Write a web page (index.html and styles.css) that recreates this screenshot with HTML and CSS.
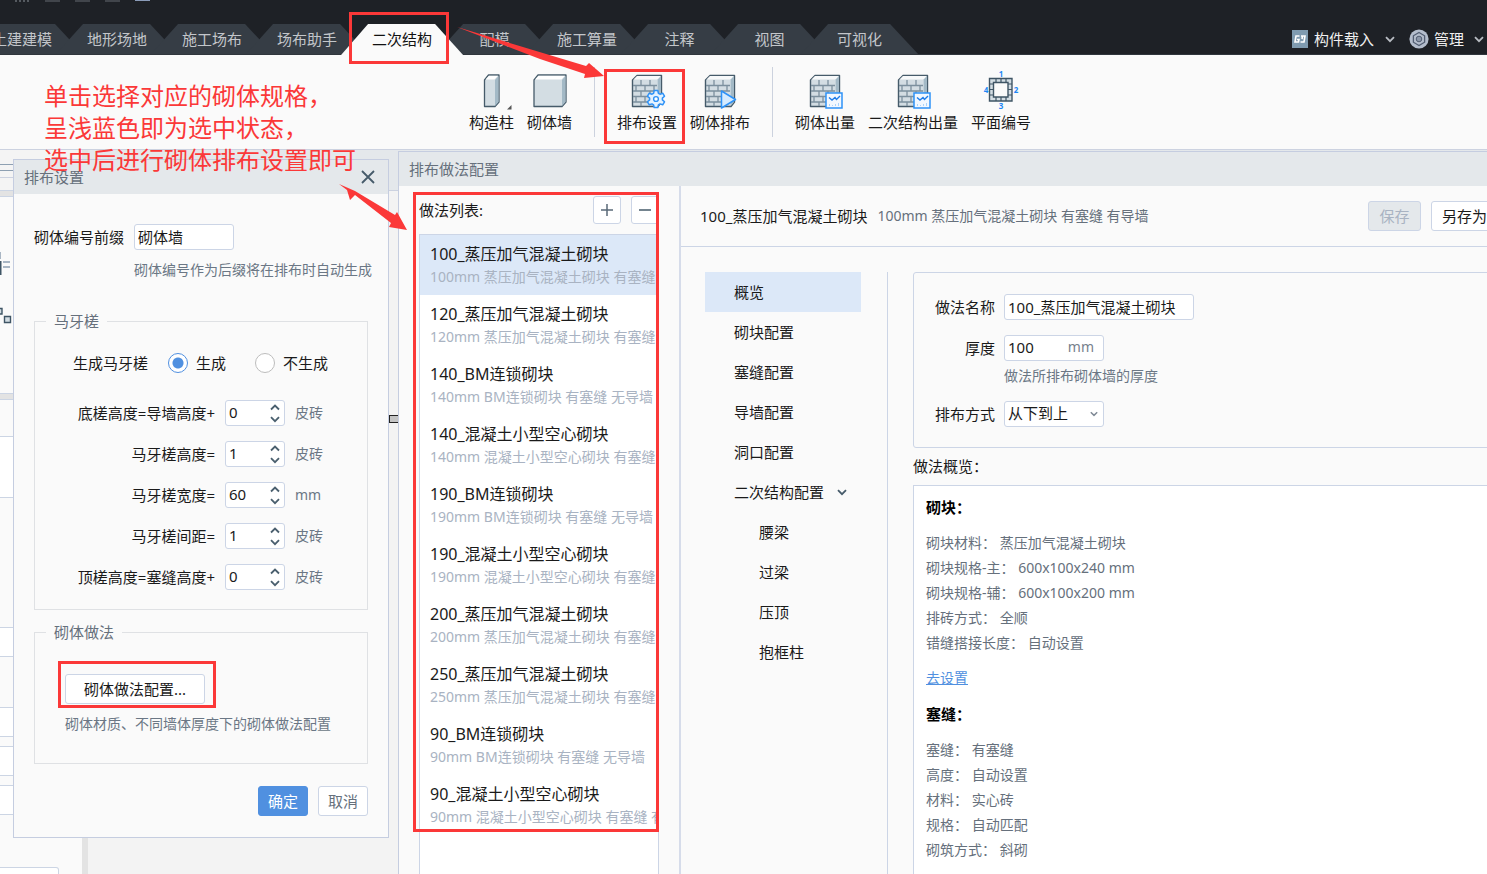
FILE: index.html
```html
<!DOCTYPE html>
<html lang="zh-CN">
<head>
<meta charset="utf-8">
<title>二次结构 - 砌体排布</title>
<link rel="stylesheet" href="styles.css">
</head>
<body>
<svg class="defs" aria-hidden="true">
  <defs>
    <symbol id="wall" viewBox="0 0 36 38">
      <path d="M3.5 35.5V9L8 4.500H32.500V31L29 35.500Z" fill="#d3dde3" stroke="#465b6a" stroke-width="1.400" stroke-linejoin="round"/>
      <path d="M4 9L8 5H32L28.500 8.500H4Z" fill="#f7f9fa"/>
      <path d="M28.700 8.500L32 5V31L28.700 35Z" fill="#a3b9c6"/>
      <path d="M4 14.500H28M4 20H28M4 25.500H28M4 31H28M12 9V14.500M21 9V14.500M7 14.500V20M16 14.500V20M25 14.500V20M12 20V25.500M21 20V25.500M7 25.500V31M16 25.500V31M12 31V35" fill="none" stroke="#7c909e" stroke-width="1.300"/>
    </symbol>
    <symbol id="chart" viewBox="0 0 36 38">
      <rect x="19" y="22" width="16" height="15" fill="#f2f8ff" stroke="#2e92f7" stroke-width="1.500"/>
      <path d="M22 26.500L25 29L28 26.500L29.500 28.500L33 25" fill="none" stroke="#1e7ce8" stroke-width="1.400"/>
      <path d="M22.500 33V35M25.500 34V35M28.500 33V35M31.500 32V35" stroke="#a9d3fb" stroke-width="1"/>
    </symbol>
    <symbol id="down" viewBox="0 0 10 7"><path d="M1 1.200L5 5.200L9 1.200" fill="none" stroke="currentColor" stroke-width="1.800"/></symbol>
    <symbol id="up" viewBox="0 0 10 7"><path d="M1 5.500L5 1.500L9 5.500" fill="none" stroke="currentColor" stroke-width="1.800"/></symbol>
  </defs>
</svg>

<div class="app">
  <header class="topbar">
    <div class="quick"><i class="q1"></i><i class="q2"></i><i class="q2"></i><i class="q2"></i><i class="q3"></i></div>
    <nav class="tabs">
      <button class="tab">土建建模</button>
      <button class="tab">地形场地</button>
      <button class="tab">施工场布</button>
      <button class="tab">场布助手</button>
      <button class="tab active">二次结构</button>
      <button class="tab">配模</button>
      <button class="tab">施工算量</button>
      <button class="tab">注释</button>
      <button class="tab">视图</button>
      <button class="tab">可视化</button>
    </nav>
    <div class="account">
      <button class="menu">
        <svg width="16" height="18" viewBox="0 0 16 18"><rect width="16" height="18" fill="#7f9bb0"/><path d="M7.500 6H4L3 12H6.500L7 9.500H5M9 6H13L12 12H8.500M10.500 6L10 9" fill="none" stroke="#fff" stroke-width="1.600"/></svg>
        构件载入
        <svg class="chev" width="10" height="7"><use href="#down"/></svg>
      </button>
      <button class="menu manage">
        <svg width="20" height="20" viewBox="0 0 20 20"><circle cx="10" cy="10" r="9.600" fill="#b4bdcc"/><path d="M10 3.500L15.600 6.800V13.200L10 16.500L4.400 13.200V6.800Z" fill="none" stroke="#525e72" stroke-width="1.300"/><circle cx="10" cy="10" r="2.800" fill="#8c97a9" stroke="#525e72" stroke-width="1"/></svg>
        管理
        <svg class="chev" width="10" height="7"><use href="#down"/></svg>
      </button>
    </div>
  </header>

  <div class="ribbon">
    <button class="tool">
      <svg width="36" height="38" viewBox="0 0 36 38"><path d="M10.500 35.500V9L14.500 4H25V31L21 35.500Z" fill="#d3dde3" stroke="#465b6a" stroke-width="1.300" stroke-linejoin="round"/><path d="M11.500 8.500L15 4.700H24L20.500 8.500Z" fill="#fff"/><path d="M21 9L24.500 5V31L21 35Z" fill="#a3b9c6"/><path d="M37.500 34V38.500H33Z" fill="#555"/></svg>
      <span>构造柱</span>
    </button>
    <button class="tool">
      <svg width="36" height="38" viewBox="0 0 36 38"><path d="M2 35.500V9L6 4H34V31L30 35.500Z" fill="#d3dde3" stroke="#465b6a" stroke-width="1.300" stroke-linejoin="round"/><path d="M3 8.500L6.500 4.700H33L29.500 8.500Z" fill="#fff"/><path d="M30 9L33.500 5V31L30 35Z" fill="#a3b9c6"/></svg>
      <span>砌体墙</span>
    </button>
    <i class="sep"></i>
    <button class="tool">
      <svg width="36" height="38" viewBox="0 0 36 38"><use href="#wall"/><path d="M25.200 19.500h3.600l.6 2.800 1.600.9 2.700-1 1.800 3-2.100 1.900v1.800l2.100 1.900-1.800 3-2.700-.9-1.600.9-.6 2.800h-3.600l-.6-2.800-1.600-.9-2.700.9-1.800-3 2.100-1.900v-1.800l-2.100-1.900 1.800-3 2.700 1 1.600-.9Z" fill="#e4f2ff" stroke="#2e92f7" stroke-width="1.500" stroke-linejoin="round"/><circle cx="27" cy="28" r="2.400" fill="#fff" stroke="#2e92f7" stroke-width="1.400"/></svg>
      <span>排布设置</span>
    </button>
    <button class="tool">
      <svg width="36" height="38" viewBox="0 0 36 38"><use href="#wall"/><path d="M19.500 20L33.500 28.500L19.500 37Z" fill="#d5ebff" stroke="#2e92f7" stroke-width="1.500" stroke-linejoin="round"/></svg>
      <span>砌体排布</span>
    </button>
    <i class="sep"></i>
    <button class="tool">
      <svg width="36" height="38" viewBox="0 0 36 38"><use href="#wall"/><use href="#chart"/></svg>
      <span>砌体出量</span>
    </button>
    <button class="tool">
      <svg width="36" height="38" viewBox="0 0 36 38"><use href="#wall"/><use href="#chart"/></svg>
      <span>二次结构出量</span>
    </button>
    <button class="tool">
      <svg width="36" height="38" viewBox="0 0 36 38"><path fill-rule="evenodd" d="M6.500 7.500H29V30H6.500ZM10.500 11.500V26H25V11.500Z" fill="#d3dde3" stroke="#3f5565" stroke-width="1.400"/><path d="M13 7.500V11.500M18 7.500V11.500M23 7.500V11.500M13 26V30M18 26V30M23 26V30M6.500 13H10.500M6.500 18.500H10.500M6.500 24H10.500M25 13H29M25 18.500H29M25 24H29" stroke="#3f5565" stroke-width="1.200"/><g class="marks"><text x="18" y="6">1</text><text x="33" y="22">2</text><text x="18" y="38">3</text><text x="3" y="22">4</text></g></svg>
      <span>平面编号</span>
    </button>
  </div>

  <main class="workspace">
    <aside class="side">
      <div class="side-head"></div>
      <div class="band"></div>
      <div class="side-icons">
        <svg width="13" height="80" viewBox="0 0 13 80"><path d="M0 1V8M3 11H10M3 16H10" stroke="#8ea0b2" stroke-width="1.500"/><path d="M0 10V24" stroke="#3f5565" stroke-width="3"/><path d="M0 57.500H2V63H0M4.500 65.500H10.500V71.500H4.500Z" fill="#d3dde3" stroke="#3f5565" stroke-width="1.400"/></svg>
      </div>
      <div class="band"></div>
      <div class="row r1"></div>
      <div class="row white r2"></div>
      <div class="row r3"></div>
      <div class="row white r4"></div>
      <div class="row r5"></div>
      <div class="row white r4"></div>
      <div class="row r6"></div>
      <div class="row white r4"></div>
      <div class="row r6"></div>
      <div class="row white r4"></div>
      <div class="r7"></div>
      <div class="side-box"></div>
    </aside>
    <div class="canvas"><div class="canvas-head"></div></div>
  </main>
</div>

<section class="dialog settings">
  <header class="title">排布设置
    <button class="close" aria-label="关闭"><svg width="14" height="14" viewBox="0 0 14 14"><path d="M1 1L13 13M13 1L1 13" stroke="#465b6a" stroke-width="1.800"/></svg></button>
  </header>
  <div class="settings-body">
    <div class="prefix">
      <label for="prefix">砌体编号前缀</label>
      <input class="box" id="prefix" type="text" value="砌体墙">
      <p class="hint">砌体编号作为后缀将在排布时自动生成</p>
    </div>
    <fieldset class="group">
      <legend>马牙槎</legend>
      <div class="radios">
        <span>生成马牙槎</span>
        <label><input type="radio" name="gen" checked>生成</label>
        <label><input type="radio" name="gen">不生成</label>
      </div>
      <div class="spins">
        <label for="s1">底槎高度=导墙高度+</label><span class="spin"><input id="s1" type="text" value="0"><span class="arrows"><svg width="10" height="7"><use href="#up"/></svg><svg width="10" height="7"><use href="#down"/></svg></span></span><span class="unit">皮砖</span>
        <label for="s2">马牙槎高度=</label><span class="spin"><input id="s2" type="text" value="1"><span class="arrows"><svg width="10" height="7"><use href="#up"/></svg><svg width="10" height="7"><use href="#down"/></svg></span></span><span class="unit">皮砖</span>
        <label for="s3">马牙槎宽度=</label><span class="spin"><input id="s3" type="text" value="60"><span class="arrows"><svg width="10" height="7"><use href="#up"/></svg><svg width="10" height="7"><use href="#down"/></svg></span></span><span class="unit">mm</span>
        <label for="s4">马牙槎间距=</label><span class="spin"><input id="s4" type="text" value="1"><span class="arrows"><svg width="10" height="7"><use href="#up"/></svg><svg width="10" height="7"><use href="#down"/></svg></span></span><span class="unit">皮砖</span>
        <label for="s5">顶槎高度=塞缝高度+</label><span class="spin"><input id="s5" type="text" value="0"><span class="arrows"><svg width="10" height="7"><use href="#up"/></svg><svg width="10" height="7"><use href="#down"/></svg></span></span><span class="unit">皮砖</span>
      </div>
    </fieldset>
    <fieldset class="group method">
      <legend>砌体做法</legend>
      <div class="method-body">
        <button class="btn config">砌体做法配置...</button>
        <p class="hint">砌体材质、不同墙体厚度下的砌体做法配置</p>
      </div>
    </fieldset>
    <div class="actions">
      <button class="btn primary">确定</button>
      <button class="btn cancel">取消</button>
    </div>
  </div>
</section>

<section class="dialog config-dialog">
  <header class="title">排布做法配置</header>
  <div class="config-body">
    <div class="methods">
      <div class="methods-head">
        <span>做法列表:</span>
        <button class="icon-btn" aria-label="添加"><svg width="14" height="14" viewBox="0 0 14 14"><path d="M1 7H13M7 1V13" stroke="#5a6a78" stroke-width="1.500"/></svg></button>
        <button class="icon-btn" aria-label="删除"><svg width="14" height="14" viewBox="0 0 14 14"><path d="M1 7H13" stroke="#465b6a" stroke-width="1.500"/></svg></button>
      </div>
      <ul class="list">
        <li class="selected"><b>100_蒸压加气混凝土砌块</b><span>100mm 蒸压加气混凝土砌块 有塞缝 有导墙</span></li>
        <li><b>120_蒸压加气混凝土砌块</b><span>120mm 蒸压加气混凝土砌块 有塞缝 有导墙</span></li>
        <li><b>140_BM连锁砌块</b><span>140mm BM连锁砌块 有塞缝 无导墙</span></li>
        <li><b>140_混凝土小型空心砌块</b><span>140mm 混凝土小型空心砌块 有塞缝 有导墙</span></li>
        <li><b>190_BM连锁砌块</b><span>190mm BM连锁砌块 有塞缝 无导墙</span></li>
        <li><b>190_混凝土小型空心砌块</b><span>190mm 混凝土小型空心砌块 有塞缝 有导墙</span></li>
        <li><b>200_蒸压加气混凝土砌块</b><span>200mm 蒸压加气混凝土砌块 有塞缝 有导墙</span></li>
        <li><b>250_蒸压加气混凝土砌块</b><span>250mm 蒸压加气混凝土砌块 有塞缝 有导墙</span></li>
        <li><b>90_BM连锁砌块</b><span>90mm BM连锁砌块 有塞缝 无导墙</span></li>
        <li><b>90_混凝土小型空心砌块</b><span>90mm 混凝土小型空心砌块 有塞缝 有导墙</span></li>
      </ul>
    </div>
    <div class="detail">
      <div class="detail-head">
        <span>100_蒸压加气混凝土砌块</span>
        <span class="desc">100mm 蒸压加气混凝土砌块 有塞缝 有导墙</span>
        <button class="btn save" disabled>保存</button>
        <button class="btn save-as">另存为</button>
      </div>
      <div class="detail-body">
        <nav class="nav">
          <a class="current" href="#overview">概览</a>
          <a href="#block">砌块配置</a>
          <a href="#gap">塞缝配置</a>
          <a href="#guide">导墙配置</a>
          <a href="#hole">洞口配置</a>
          <a href="#second">二次结构配置<svg width="10" height="7"><use href="#down"/></svg></a>
          <a class="sub" href="#waist">腰梁</a>
          <a class="sub" href="#lintel">过梁</a>
          <a class="sub" href="#top">压顶</a>
          <a class="sub" href="#frame">抱框柱</a>
        </nav>
        <div class="content">
          <div class="form">
            <label for="name">做法名称</label><input class="box name" id="name" type="text" value="100_蒸压加气混凝土砌块">
            <label for="thick">厚度</label><span class="thick"><input id="thick" type="text" value="100"><span>mm</span></span>
            <p class="hint">做法所排布砌体墙的厚度</p>
            <label for="mode">排布方式</label><span class="pick"><select class="box" id="mode"><option>从下到上</option></select><svg width="8" height="6" viewBox="0 0 10 7"><use href="#down"/></svg></span>
          </div>
          <div class="caption">做法概览：</div>
          <div class="overview" id="overview">
            <h3>砌块：</h3>
            <p>砌块材料：&nbsp;蒸压加气混凝土砌块</p>
            <p>砌块规格-主：&nbsp;600x100x240 mm</p>
            <p>砌块规格-辅：&nbsp;600x100x200 mm</p>
            <p>排砖方式：&nbsp;全顺</p>
            <p>错缝搭接长度：&nbsp;自动设置</p>
            <a href="#block">去设置</a>
            <h3>塞缝：</h3>
            <p>塞缝：&nbsp;有塞缝</p>
            <p>高度：&nbsp;自动设置</p>
            <p>材料：&nbsp;实心砖</p>
            <p>规格：&nbsp;自动匹配</p>
            <p>砌筑方式：&nbsp;斜砌</p>
          </div>
        </div>
      </div>
    </div>
  </div>
</section>

<i class="handle"></i>
<div class="mark m-tab"></div>
<div class="mark m-tool"></div>
<div class="mark m-config"></div>
<div class="mark m-list"></div>
<svg class="arrow a1" width="150" height="54" viewBox="0 0 150 54"><path d="M1 1L130 40L133 37L148 50L128 52L129 48L84 33Z" fill="#fb3838"/></svg>
<svg class="arrow a2" width="72" height="50" viewBox="0 0 72 50"><path d="M1 1L17 8L57 32L59 29L69 47L51 44L53 40L17 12L12 17L9 7Z" fill="#fb3838"/></svg>
<div class="note">单击选择对应的砌体规格，<br>呈浅蓝色即为选中状态，<br>选中后进行砌体排布设置即可</div>
</body>
</html>
```
FILE: styles.css
```css
* { box-sizing: border-box; }
body {
  margin: 0;
  position: relative;
  height: 100vh;
  overflow: hidden;
  font: 15px/20px "Noto Sans", "Noto Sans CJK SC", sans-serif;
  color: #1a1a1a;
  background: #f3f3f3;
}
button, input, select { font: inherit; color: inherit; margin: 0; }
button { border: 0; background: none; padding: 0; white-space: nowrap; }
p, h3, ul { margin: 0; padding: 0; }
svg { display: block; flex: none; }
.defs { position: absolute; width: 0; height: 0; }
.app { display: flex; flex-direction: column; height: 100%; }

/* top bar */
.topbar {
  position: relative;
  isolation: isolate;
  display: flex;
  align-items: flex-end;
  height: 55px;
  background: #1e2126;
  border-bottom: 1px solid #30363d;
}
.quick { position: absolute; left: 15px; top: 0; display: flex; gap: 15px; }
.quick i { width: 15px; height: 2px; background: #41454b; }
.quick .q1 { background: repeating-linear-gradient(90deg, #555a60 0 2px, #1e2126 2px 4px); }
.quick .q3 { height: 1px; background: #8a9bb8; }
.tabs { display: flex; margin-left: -12px; }
.tab {
  position: relative;
  height: 30px;
  min-width: 117px;
  margin-left: -27px;
  padding: 0 31px;
  color: #c3c6ca;
  background: #363d45;
  clip-path: polygon(27px 0, calc(100% - 28px) 0, 100% 100%, 0 100%);
}
.tab.active { z-index: 1; height: 31px; margin-bottom: -1px; padding-bottom: 2px; background: #fafafa; color: #111; }
.account { display: flex; gap: 14px; margin-left: auto; padding: 0 3px 5px 0; }
.menu { display: flex; align-items: center; gap: 6px; color: #f0f0f0; }
.menu .chev { margin-left: 5px; color: #b8bcc2; }
.manage { gap: 5px; }

/* ribbon */
.ribbon {
  display: flex;
  flex: none;
  align-items: flex-start;
  gap: 13px;
  height: 95px;
  padding: 16px 0 0 469px;
  background: #fafafa;
  border-bottom: 1px solid #ccd2e0;
}
.tool { display: flex; flex-direction: column; align-items: center; gap: 3px; }
.tool svg { overflow: visible; }
.tool span { line-height: 20px; }
.sep { width: 1px; height: 70px; margin: -4px 9px 0; background: #ccd2de; }
.marks text { font-size: 8px; font-weight: 700; fill: #1e88f5; text-anchor: middle; }

/* workspace behind the dialogs */
.workspace { display: flex; flex: 1; min-height: 0; }
.side { width: 88px; border-right: 6px solid #e3e3e3; background: #fafafa; overflow: hidden; }
.side-head {
  height: 40px;
  background: linear-gradient(#8ea0b2, #8ea0b2) 0 14px / 13px 1px no-repeat,
    linear-gradient(#8ea0b2, #8ea0b2) 0 20px / 13px 1px no-repeat,
    linear-gradient(#ccd2e0, #ccd2e0) 0 27px / 100% 1px no-repeat #f4f4f4;
}
.band { height: 7px; background: #e3e3e3; border: solid #ccd5e4; border-width: 1px 0; }
.side-icons { height: 196px; padding-top: 54px; }
.row { border-bottom: 1px solid #ccd5e4; }
.white { background: #fff; }
.r1 { height: 37px; }
.r2 { height: 61px; }
.r3 { height: 130px; }
.r4 { height: 29px; }
.r5 { height: 51px; }
.r6 { height: 10px; }
.r7 { height: 52px; }
.side-box { width: 59px; height: 30px; border: 1px solid #ccd5e4; border-left: 0; border-radius: 0 3px 0 0; background: #fff; }
.canvas { flex: 1; background: #f3f3f3; }
.canvas-head { height: 41px; background: #e4e8eb; border-bottom: 1px solid #ccd2e0; }

/* dialogs */
.dialog { position: absolute; background: #fafafa; border: 1px solid #c5cde0; }
.title {
  display: flex;
  flex: none;
  align-items: center;
  justify-content: space-between;
  height: 34px;
  padding: 0 13px 0 10px;
  color: #66707c;
  background: #e4e8eb;
}
.settings { left: 13px; top: 159px; width: 376px; }
.settings-body { padding: 30px 20px 21px; }
.prefix { display: grid; grid-template-columns: auto 100px 1fr; column-gap: 10px; align-items: center; }
.prefix .hint { grid-column: 2 / 4; margin-top: 10px; }
.hint { font-size: 14px; line-height: 20px; color: #6b7785; white-space: nowrap; }
.box, .spin, .thick {
  height: 26px;
  padding: 0 3px 2px;
  background: #fff;
  border: 1px solid #ccd5e6;
  border-radius: 3px;
  outline: 0;
}
.group { margin: 31px 0 0; padding: 21px 0 19px; border: 1px solid #dfe1e4; }
.group legend { margin-left: 11px; padding: 0 8px; color: #66707c; line-height: 20px; }
.radios { display: flex; align-items: center; height: 22px; padding-left: 38px; }
.radios label { display: flex; align-items: center; gap: 8px; margin-left: 20px; }
.radios label + label { margin-left: 29px; }
.radios input {
  appearance: none;
  width: 20px;
  height: 20px;
  border: 1px solid #bdbdbd;
  border-radius: 50%;
  background: #fff;
}
.radios input:checked { border-color: #5090e0; background: radial-gradient(circle, #5090e0 5px, #fff 6px); }
.spins {
  display: grid;
  grid-template-columns: 180px 60px auto;
  column-gap: 10px;
  row-gap: 15px;
  align-items: center;
  margin-top: 26px;
}
.spins label { text-align: right; white-space: nowrap; }
.spin, .thick { display: flex; align-items: center; }
.spin input, .thick input { width: 100%; min-width: 0; border: 0; padding: 0; outline: 0; background: none; }
.arrows { display: flex; flex-direction: column; gap: 5px; padding: 2px 1px 0 0; color: #4a5f6e; }
.unit { font-size: 14px; color: #6b7785; }
.btn { height: 30px; padding: 0 9px; background: #fff; border: 1px solid #ccd5e6; border-radius: 3px; }
.method { margin-top: 12px; padding: 32px 0 29px; }
.method-body { padding-left: 30px; }
.config { width: 140px; }
.method .hint { margin-top: 10px; }
.actions { display: flex; justify-content: flex-end; gap: 10px; margin-top: 22px; }
.primary { background: #5090e0; border-color: #5090e0; color: #fff; }
.cancel { color: #66707c; }

.config-dialog { left: 398px; right: -31px; top: 151px; bottom: -10px; display: flex; flex-direction: column; }
.config-body { display: flex; flex: 1; min-height: 0; }
.methods { display: flex; flex-direction: column; width: 282px; padding: 10px 20px 0; border-right: 2px solid #d6dcea; }
.methods-head { display: flex; align-items: center; gap: 10px; height: 28px; overflow: hidden; }
.methods-head span { margin-right: auto; }
.icon-btn { display: grid; place-items: center; width: 28px; height: 28px; background: #fff; border: 1px solid #ccd5e6; border-radius: 3px; }
.list { flex: 1; margin-top: 10px; border: 1px solid #ccd5e6; background: #fff; list-style: none; overflow: hidden; }
.list li { display: flex; flex-direction: column; height: 60px; padding: 7px 0 0 10px; white-space: nowrap; }
.list b { font-size: 16px; font-weight: 400; line-height: 24px; }
.list span { font-size: 14px; line-height: 22px; color: #a9b3c2; }
.list .selected { background: #dce8f8; }
.detail { display: flex; flex: 1; flex-direction: column; min-width: 0; }
.detail-head {
  display: flex;
  flex: none;
  align-items: center;
  gap: 10px;
  height: 61px;
  padding: 0 19px;
  border-bottom: 1px solid #ccd5e6;
  white-space: nowrap;
}
.desc { margin-right: auto; font-size: 14px; color: #66707c; }
.save { width: 53px; background: #e4e8eb; color: #a9b3c2; }
.save-as { width: 67px; }
.detail-body { display: flex; flex: 1; min-height: 0; padding: 25px 0 0 24px; }
.nav { width: 183px; padding-right: 26px; border-right: 1px solid #ccd5e6; }
.nav a { display: flex; align-items: center; gap: 13px; height: 40px; padding-left: 29px; color: inherit; text-decoration: none; }
.nav .sub { padding-left: 54px; }
.nav svg { color: #465b6a; }
.nav .current { background: #dce8f8; }
.content { display: flex; flex: 1; flex-direction: column; padding: 0 10px 0 25px; }
.form {
  display: grid;
  grid-template-columns: 81px 190px;
  column-gap: 9px;
  align-items: center;
  padding: 21px 0 20px;
  border: 1px solid #ccd5e6;
  border-radius: 3px;
}
.form label { text-align: right; }
.thick { width: 100px; margin-top: 15px; padding-right: 9px; }
.form label[for="thick"] { margin-top: 15px; }
.thick span { font-size: 14px; color: #77818d; }
.form .hint { grid-column: 2; margin: 5px 0 15px; }
.pick { position: relative; width: 100px; }
.pick select { display: block; width: 100%; appearance: none; }
.pick svg { position: absolute; right: 6px; top: 10px; color: #808a96; }
.caption { padding: 8px 0 9px; }
.overview { flex: 1; padding: 11px 12px 0; border: 1px solid #ccd5e6; background: #fff; font-size: 14px; color: #66707c; overflow: hidden; }
.overview h3 { margin-bottom: 13px; font-size: 15px; line-height: 20px; color: #000; }
.overview p { line-height: 25px; }
.overview a { display: block; width: fit-content; margin: 13px 0 16px; line-height: 20px; color: #5090e0; }

/* annotations */
.handle { position: absolute; left: 389px; top: 415px; width: 9px; height: 8px; background: #c4c4c4; border: 1px solid #222; border-right: 0; }
.mark { position: absolute; border: 3px solid #fb3838; pointer-events: none; }
.m-tab { left: 349px; top: 12px; width: 100px; height: 52px; }
.m-tool { left: 604px; top: 69px; width: 81px; height: 75px; }
.m-config { left: 58px; top: 661px; width: 158px; height: 47px; }
.m-list { left: 413px; top: 192px; width: 246px; height: 640px; }
.arrow { position: absolute; pointer-events: none; }
.a1 { left: 456px; top: 26px; }
.a2 { left: 338px; top: 183px; }
.note { position: absolute; left: 44px; top: 80px; font-size: 24px; line-height: 32px; color: #fb3838; white-space: nowrap; }
```
